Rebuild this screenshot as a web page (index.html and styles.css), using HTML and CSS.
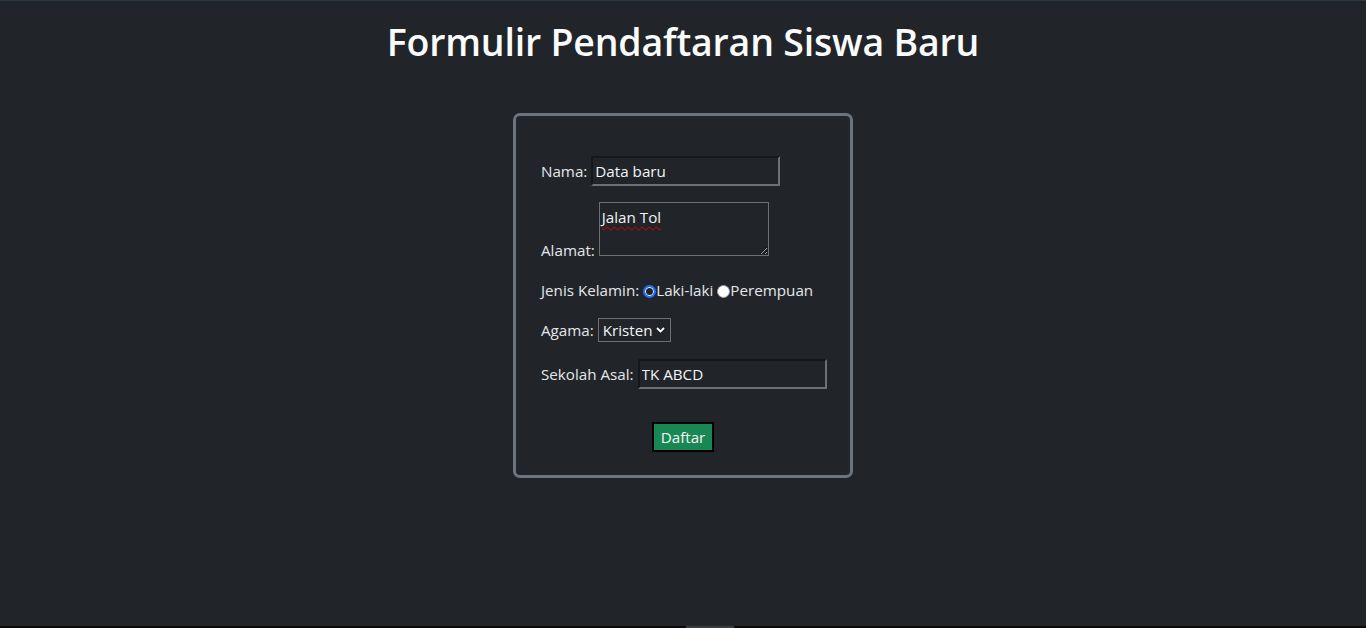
FILE: index.html
```html
<!DOCTYPE html>
<html lang="id">
<head>
<meta charset="utf-8">
<title>Formulir Pendaftaran Siswa Baru</title>
<link rel="stylesheet" href="styles.css">
</head>
<body>
<div class="page">
  <h1 class="title">Formulir Pendaftaran Siswa Baru</h1>
  <form class="card">
    <div class="row row-nama">
      <label class="lbl" for="nama">Nama:</label> <input id="nama" class="field" type="text" value="Data baru">
    </div>
    <div class="row row-alamat">
      <label class="lbl" for="alamat">Alamat:</label> <textarea id="alamat" class="area">Jalan Tol</textarea>
    </div>
    <div class="row row-jk">
      <span class="lbl">Jenis Kelamin:</span> <input class="radio" type="radio" name="jk" id="l" checked><label for="l">Laki-laki</label> <input class="radio" type="radio" name="jk" id="p"><label for="p">Perempuan</label>
    </div>
    <div class="row row-agama">
      <label class="lbl" for="agama">Agama:</label> <select id="agama" class="sel"><option>Kristen</option></select>
    </div>
    <div class="row row-sekolah">
      <label class="lbl" for="sekolah">Sekolah Asal:</label> <input id="sekolah" class="field" type="text" value="TK ABCD">
    </div>
    <div class="actions">
      <button class="btn" type="button">Daftar</button>
    </div>
  </form>
  <div class="bottom-bar"><span class="bottom-seg"></span></div>
</div>
</body>
</html>
```

FILE: styles.css
```css
html, body {
  margin: 0;
  padding: 0;
}

body {
  background: #212529;
  color: #e4e7ea;
  font-family: "Open Sans", "Noto Sans", "DejaVu Sans", sans-serif;
  font-size: 15.2px;
}

.page {
  height: 628px;
  box-sizing: border-box;
  border-top: 1px solid #2b3a3c;
  display: flex;
  flex-direction: column;
}

.title {
  margin: 0;
  padding-top: 17px;
  text-align: center;
  font-size: 37.5px;
  font-weight: 600;
  line-height: 48px;
  color: #fafbfc;
  letter-spacing: -0.2px;
}

.card {
  box-sizing: border-box;
  width: 340px;
  height: 365px;
  margin: 47px auto 0;
  border: 3px solid #6c757d;
  border-radius: 7px;
  padding: 40px 0 0 25px;
  line-height: 21px;
}

.row {
  white-space: nowrap;
}

.row-alamat { margin-top: 16px; }
.row-jk { margin-top: 19px; }
.row-agama { margin-top: 17px; }
.row-sekolah { margin-top: 17px; }

.field {
  box-sizing: border-box;
  width: 189px;
  height: 30px;
  margin: 0;
  padding: 1px 2px;
  font: inherit;
  color: #f2f4f6;
  background: #212529;
  border: 2px solid;
  border-color: #15181b #707070 #707070 #15181b;
  outline: none;
}

.area {
  box-sizing: border-box;
  width: 170px;
  height: 54px;
  margin: 0;
  padding: 4px 2px 2px;
  font: inherit;
  line-height: 21px;
  color: #f2f4f6;
  background: #212529;
  border: 1px solid #6f6f6f;
  resize: both;
  outline: none;
  vertical-align: baseline;
  text-decoration: underline wavy #e00000;
  text-decoration-thickness: 1px;
  text-underline-offset: 3px;
}

.radio {
  appearance: none;
  -webkit-appearance: none;
  box-sizing: border-box;
  width: 13px;
  height: 13px;
  margin: 0;
  border-radius: 50%;
  vertical-align: -2px;
  background: #ffffff;
  border: 1px solid #9a9a9a;
}

.radio:checked {
  background: #1b2330;
  border: 2px solid #1a73ff;
  box-shadow: inset 0 0 0 1px #ffffff;
}

.sel {
  appearance: none;
  -webkit-appearance: none;
  box-sizing: border-box;
  width: 73px;
  height: 24px;
  margin: 0;
  padding: 0 14px 0 4px;
  font: inherit;
  color: #f2f4f6;
  background-color: #212529;
  background-image: url("data:image/svg+xml,%3Csvg xmlns='http://www.w3.org/2000/svg' width='9' height='6' viewBox='0 0 9 6'%3E%3Cpath d='M1 1l3.5 3.5L8 1' fill='none' stroke='%23ffffff' stroke-width='1.8'/%3E%3C/svg%3E");
  background-repeat: no-repeat;
  background-position: right 5px center;
  border: 1px solid #6f6f6f;
  border-radius: 0;
  outline: none;
}

.actions {
  margin-top: 33px;
  padding-right: 25px;
  display: flex;
  justify-content: center;
}

.btn {
  box-sizing: border-box;
  height: 30px;
  padding: 0 7px;
  font: inherit;
  color: #f4f6f5;
  background: #198754;
  border: 2px solid #000000;
  border-radius: 0;
}

.bottom-bar {
  margin-top: auto;
  height: 2px;
  background: #0a0a0a;
  display: flex;
  padding-left: 686px;
}

.bottom-seg {
  width: 48px;
  height: 2px;
  background: #3a3d40;
}
```
